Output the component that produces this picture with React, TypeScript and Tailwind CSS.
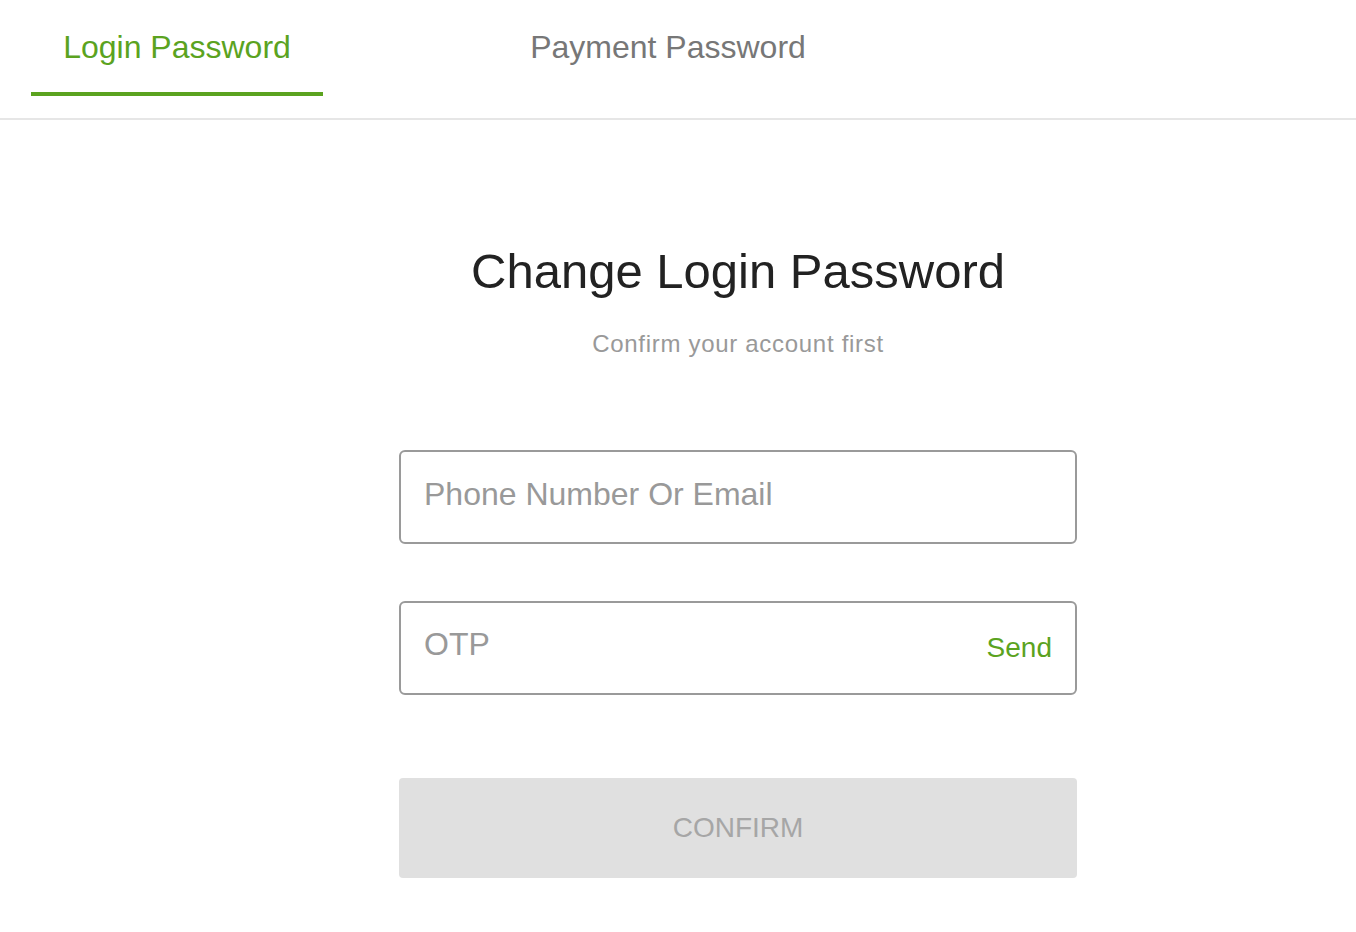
export default function App() {
  return (
    <div className="min-h-[932px] bg-white font-['Liberation_Sans',Arial,sans-serif]">
      {/* Tabs */}
      <div className="flex border-b-2 border-[#e6e6e6] pb-[22px] pl-[31px]">
        <button className="flex w-[292px] flex-col items-center">
          <span className="pt-[28px] pb-[26px] text-[32px] leading-[38px] text-[#5ba31f]">Login Password</span>
          <span className="h-[4px] w-full bg-[#5ba31f]" />
        </button>
        <button className="ml-[199px] flex w-[292px] flex-col items-center">
          <span className="pt-[28px] pb-[26px] text-[32px] leading-[38px] text-[#777]">Payment Password</span>
          <span className="h-[4px] w-full bg-transparent" />
        </button>
      </div>

      {/* Form */}
      <div className="ml-[399px] flex w-[678px] flex-col pt-[122px]">
        <h1 className="text-center text-[49px] leading-[58px] text-[#222]">Change Login Password</h1>
        <p className="mt-[29px] text-center text-[24px] leading-[30px] tracking-[0.7px] text-[#999]">
          Confirm your account first
        </p>

        <div className="mt-[91px] flex h-[94px] items-center rounded-[6px] border-2 border-[#9a9a9a] px-[23px]">
          <input
            placeholder="Phone Number Or Email"
            className="-mt-[6px] w-full bg-transparent text-[32px] text-[#333] outline-none placeholder:text-[#999]"
          />
        </div>

        <div className="mt-[57px] flex h-[94px] items-center rounded-[6px] border-2 border-[#9a9a9a] pr-[23px] pl-[23px]">
          <input
            placeholder="OTP"
            className="-mt-[8px] w-full bg-transparent text-[32px] text-[#333] outline-none placeholder:text-[#999]"
          />
          <span className="shrink-0 text-[28px] text-[#5ba31f]">Send</span>
        </div>

        <button className="mt-[83px] h-[100px] rounded-[4px] bg-[#e0e0e0] text-[28px] text-[#a6a6a6]">CONFIRM</button>
      </div>
    </div>
  );
}
